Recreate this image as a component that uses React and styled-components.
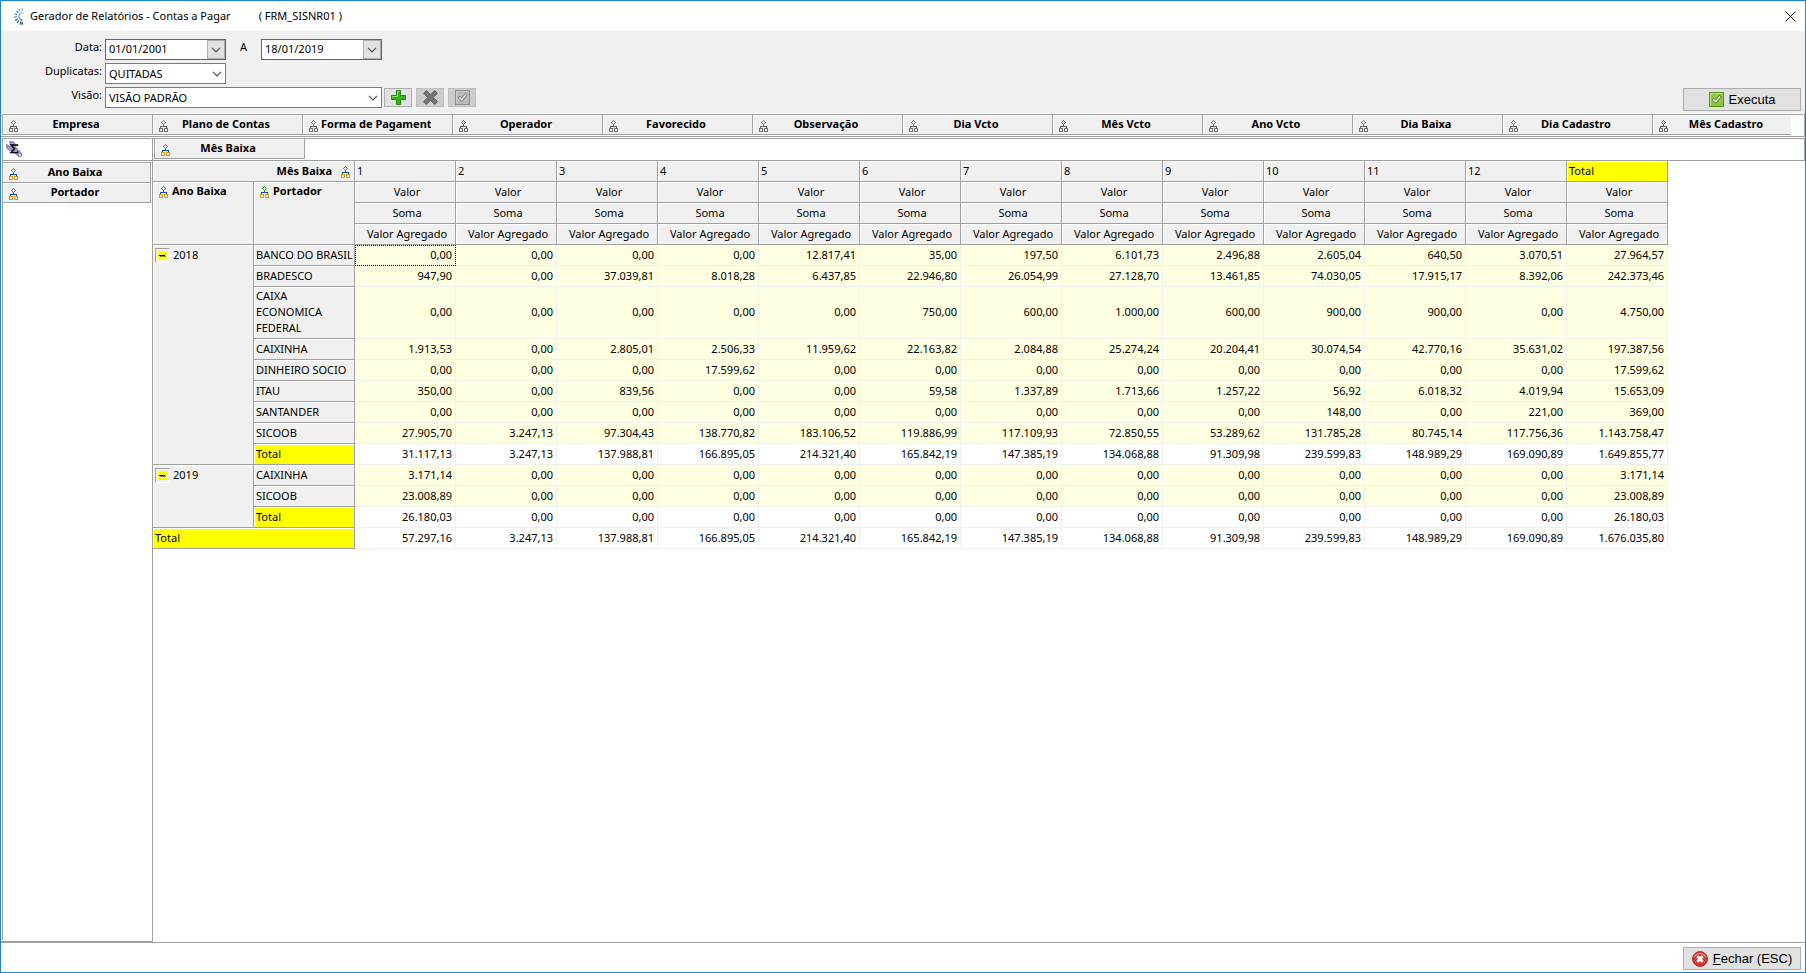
import React, { useState } from "react";
import styled, { createGlobalStyle } from "styled-components";

const LINE = "#a0a0a0";
const FACE = "#f0f0f0";
const YELLOW = "#ffff00";

const GlobalStyle = createGlobalStyle`
    * {
        box-sizing: border-box;
    }
    body {
        margin: 0;
        background-color: white;
        color: black;
        font-family: "Noto Sans", "Open Sans", sans-serif;
        font-size: 11px;
        line-height: 16px;
    }
    button, input, select {
        margin: 0;
        font: inherit;
        color: inherit;
    }
    svg {
        display: block;
        flex-shrink: 0;
    }
`;

const Window = styled.div`
    min-height: 100vh;
    display: flex;
    flex-direction: column;
    border: 1px solid #1883d7;
`;

const TitleBar = styled.header`
    height: 30px;
    padding: 0 9px 0 11px;
    display: flex;
    align-items: center;
`;

const Title = styled.h1`
    margin: 0 28px 0 6px;
    font-size: 11px;
    font-weight: 400;
    white-space: pre;
`;

const CloseButton = styled.button`
    margin-left: auto;
    padding: 0;
    border: none;
    background: none;
`;

const Toolbar = styled.section`
    padding: 8px 4px 2px 0;
    display: flex;
    justify-content: space-between;
    align-items: flex-end;
    background-color: ${FACE};
`;

const Filters = styled.div`
    padding-bottom: 3px;
    display: flex;
    flex-direction: column;
    gap: 3px;
`;

const FilterRow = styled.div`
    height: 21px;
    display: flex;
`;

const FilterLabel = styled.label`
    width: 101px;
    margin-right: 3px;
    text-align: right;
`;

const ToLabel = styled.label`
    width: 35px;
    text-align: center;
`;

const DateBox = styled.div`
    width: 121px;
    display: flex;
    border: 1px solid #646464;
    background-color: white;

    input {
        flex: 1;
        min-width: 0;
        padding: 0 3px 2px;
        border: none;
        background: none;
        outline: none;
    }
    button {
        width: 18px;
        padding: 0;
        border: 1px solid #adadad;
        background-color: #e1e1e1;
        display: flex;
        align-items: center;
        justify-content: center;
    }
`;

const SelectBox = styled.div`
    width: ${(props) => props.$width}px;
    display: grid;
    align-items: center;
    border: 1px solid #7a7a7a;
    background-color: white;

    select {
        grid-area: 1 / 1;
        width: 100%;
        height: 19px;
        padding: 0 20px 0 3px;
        border: none;
        background: none;
        outline: none;
        appearance: none;
    }
    svg {
        grid-area: 1 / 1;
        justify-self: end;
        margin-right: 3px;
        pointer-events: none;
    }
`;

const ViewButtons = styled.div`
    margin-left: 2px;
    display: flex;
    align-items: center;
    gap: 4px;
`;

const ViewButton = styled.button`
    width: 28px;
    height: 19px;
    padding: 0;
    display: flex;
    align-items: center;
    justify-content: center;
    border: 1px solid #adadad;
    background-color: #e1e1e1;
    &:disabled {
        border-color: #bfbfbf;
        background-color: #cccccc;
    }
`;

const ActionButton = styled.button`
    width: 118px;
    height: 23px;
    padding: 0;
    display: flex;
    align-items: center;
    justify-content: center;
    gap: 5px;
    border: 1px solid #adadad;
    background-color: #e1e1e1;
    font-family: "Liberation Sans", Arial, sans-serif;
    font-size: 13px;
`;

const AvailableFields = styled.section`
    padding: 1px;
    border-right: 1px solid ${LINE};
    border-bottom: 1px solid ${LINE};
`;

const FieldList = styled.div`
    padding-right: 12px;
    border-top: 1px solid ${LINE};

    & > div {
        display: flex;
        overflow: hidden;
    }
`;

const Field = styled.button`
    flex: none;
    width: ${(props) => props.$width}px;
    height: 20px;
    padding: 0 0 0 6px;
    display: flex;
    align-items: center;
    border: 0 solid ${LINE};
    border-width: ${(props) => props.$edges};
    background-color: ${FACE};
    box-shadow: inset 1px 1px white;
    font-weight: 700;

    svg {
        margin-top: 2px;
    }
    span {
        flex: 1;
        margin: 0 21px 2px 3px;
        overflow: hidden;
        white-space: nowrap;
        text-align: center;
    }
`;

const Content = styled.div`
    flex: 1;
    display: flex;
    margin-top: 1px;
    border-bottom: 1px solid ${LINE};
`;

const Sidebar = styled.aside`
    width: 152px;
    flex: none;
    padding-left: 1px;
    display: flex;
    flex-direction: column;
    border-right: 1px solid ${LINE};
    border-bottom: 1px solid ${LINE};
`;

const DataFields = styled.div`
    height: 22px;
    margin-right: 1px;
    padding: 2px 3px;
    border-top: 1px solid ${LINE};
    border-left: 1px solid ${LINE};
`;

const RowFields = styled.div`
    flex: 1;
    margin-bottom: 1px;
    padding-top: 1px;
    border-top: 1px solid ${LINE};
    border-left: 1px solid ${LINE};
`;

const RowFieldList = styled.div`
    width: 148px;
    border-top: 1px solid ${LINE};
`;

const Pivot = styled.main`
    flex: 1;
    min-width: 0;
`;

const ColumnFields = styled.div`
    height: 23px;
    padding-left: 1px;
    border: 1px solid ${LINE};
    border-left: none;
`;

const Table = styled.table`
    width: 1515px;
    table-layout: fixed;
    border-collapse: separate;
    border-spacing: 0;
`;

const HeadCell = styled.th`
    height: 21px;
    padding: 1px 0 2px ${(props) => (props.$align === "center" ? 4 : 2)}px;
    border: 0 solid ${LINE};
    border-width: 0 1px 1px 0;
    background-color: ${(props) => (props.$total ? YELLOW : FACE)};
    box-shadow: inset 1px 1px white;
    font-weight: 400;
    text-align: ${(props) => props.$align || "left"};
    vertical-align: ${(props) => (props.$top ? "top" : "middle")};
`;

const FieldName = styled.div`
    padding: 0 4px;
    display: flex;
    gap: 4px;
    align-items: center;
    justify-content: ${(props) => (props.$end ? "flex-end" : "flex-start")};
    font-weight: 700;

    svg {
        margin-top: 2px;
    }
    span {
        padding-right: ${(props) => (props.$end ? 5 : 0)}px;
    }
`;

const Group = styled.div`
    padding-top: 1px;
    display: flex;
    align-items: center;
    gap: 3px;
`;

const Toggle = styled.button`
    width: 15px;
    height: 15px;
    padding: 2px;
    border: 1px solid;
    border-color: ${LINE} white white ${LINE};
    background-color: ${FACE};
`;

const Value = styled.td`
    height: 21px;
    padding: 1px 3px 2px 0;
    border: 0 solid ${FACE};
    border-width: 0 1px 1px 0;
    background-color: ${(props) => (props.$total ? "white" : "#ffffe1")};
    text-align: right;
    ${(props) => props.$current && "outline: 1px dotted black; outline-offset: -1px;"}
`;

const Footer = styled.footer`
    padding: 4px 4px 2px;
    display: flex;
    justify-content: flex-end;
`;

const rays = [
    [92, "#8db6d3"],
    [115, "#7eb0d0"],
    [138, "#6aa3c4"],
    [161, "#5b97b8"],
    [184, "#4a8bac"],
    [207, "#3d7c9c"],
    [230, "#316c8a"],
    [253, "#285d78"],
    [268, "#214f68"],
];

const Logo = () => (
    <svg width="12" height="17" viewBox="0 0 12 17" strokeWidth="1.4">
        {rays.map(([angle, color]) => (
            <g key={angle} stroke={color} transform={`translate(10.5 8.5) rotate(${-angle})`}>
                <path d="M5.4 0h2.900" />
                <path d="M2.800 .6h1.500" opacity=".7" />
            </g>
        ))}
    </svg>
);

const CloseIcon = () => (
    <svg width="11" height="11" viewBox="0 0 11 11" stroke="black">
        <path d="M.5.5l10 10M10.5.5l-10 10" />
    </svg>
);

const Chevron = () => (
    <svg width="10" height="6" viewBox="0 0 10 6" fill="none" stroke="#505050" strokeWidth="1.2">
        <path d="M1 .8l4 4 4-4" />
    </svg>
);

const TreeIcon = ({ muted }) => {
    const [top, stem, leaf] = muted
        ? ["#707070", "#606060", "#707070"]
        : ["#2ca01c", "#0d4fae", "#d39a1c"];
    return (
        <svg width="9" height="12" viewBox="0 0 9 12" shapeRendering="crispEdges">
            <path
                fill={top}
                d="M4 0h1v1H4zM3 1h1v1H3zM5 1h1v1H5zM2 2h1v1H2zM6 2h1v1H6zM3 3h1v1H3zM5 3h1v1H5zM4 4h1v1H4z"
            />
            <path fill={stem} d="M4 5h1v1h3v2H7V7H2v1H1V6h3z" />
            <path
                fill={leaf}
                fillRule="evenodd"
                d="M0 8h4v4H0zM1 9v2h2V9zM5 8h4v4H5zM6 9v2h2V9z"
            />
        </svg>
    );
};

const SumIcon = () => (
    <svg width="17" height="17" viewBox="0 0 17 17">
        <path
            d="M3 .8L7.500.8l1.500 2 .3 3 6 6.200.8 2.400-1.600 1.700-2.300-.7L6.500 9.800l-3.200-.2L.8 7 .5 3.200l3.300 2.600 1.400-1.400z"
            fill="#9a9cc8"
            stroke="#6a6c98"
            strokeWidth=".8"
        />
        <path d="M11.500 5.200V4H5l3.500 3.800L5 11.600h6.700v-1.400" fill="none" stroke="black" strokeWidth="1.4" />
        <circle cx="14" cy="14.200" r="1" fill="#e4e4f4" />
    </svg>
);

const PlusIcon = () => (
    <svg width="15" height="15" viewBox="0 0 15 15">
        <path d="M5.5.5h4v5h5v4h-5v5h-4v-5h-5v-4h5z" fill="#35b51b" stroke="#23860f" />
        <path d="M8.500 1.500h-2v5h-5v1" fill="none" stroke="#8be070" />
    </svg>
);

const DeleteIcon = () => (
    <svg width="15" height="15" viewBox="0 0 15 15">
        <path
            d="M3.3.6l4.200 4.200L11.700.6l2.700 2.700-4.200 4.200 4.200 4.200-2.700 2.700-4.200-4.200-4.200 4.200L.6 11.700l4.200-4.200L.6 3.300z"
            fill="#767676"
            stroke="#5c5c5c"
        />
    </svg>
);

const CheckIcon = ({ muted }) => (
    <svg width="15" height="15" viewBox="0 0 15 15">
        <rect
            x=".5"
            y=".5"
            width="14"
            height="14"
            fill={muted ? "#b9b9b9" : "#8cc63a"}
            stroke={muted ? "#8c8c8c" : "#5b8f1c"}
        />
        <path d="M1.5 13.500v-12h12" fill="none" stroke={muted ? "#cfcfcf" : "#bfe285"} />
        <path
            d="M3.200 8l1.600-1.700 1.900 1.700L10.400 3.300l1.700 1.200-5 7z"
            fill={muted ? "#e2e2e2" : "#f4fbe8"}
            stroke={muted ? "#707070" : "#3f7410"}
            strokeWidth=".9"
        />
    </svg>
);

const CancelIcon = () => (
    <svg width="16" height="16" viewBox="0 0 16 16">
        <circle cx="8" cy="8" r="7.4" fill="#d23a35" stroke="#a32421" />
        <path d="M2.500 6a6 6 0 0 1 11 0" fill="none" stroke="#ec8a80" strokeWidth="1.400" />
        <path d="M5.300 5.300l5.400 5.400M10.700 5.300l-5.400 5.400" stroke="white" strokeWidth="2.800" />
    </svg>
);

const MinusIcon = () => (
    <svg width="9" height="9" viewBox="0 0 9 9" shapeRendering="crispEdges">
        <path fill={YELLOW} d="M0 0h9v9H0z" />
        <path fill="#808080" d="M2 5h6v1H2z" />
        <path fill="black" d="M1 4h6v1H1z" />
    </svg>
);

const fields = [
    "Empresa",
    "Plano de Contas",
    "Forma de Pagamento",
    "Operador",
    "Favorecido",
    "Observação",
    "Dia Vcto",
    "Mês Vcto",
    "Ano Vcto",
    "Dia Baixa",
    "Dia Cadastro",
    "Mês Cadastro",
];

const months = ["1", "2", "3", "4", "5", "6", "7", "8", "9", "10", "11", "12"];
const columns = [...months, "Total"];

const groups = [
    {
        year: "2018",
        rows: [
            ["BANCO DO BRASIL", "0,00 0,00 0,00 0,00 12.817,41 35,00 197,50 6.101,73 2.496,88 2.605,04 640,50 3.070,51 27.964,57"],
            ["BRADESCO", "947,90 0,00 37.039,81 8.018,28 6.437,85 22.946,80 26.054,99 27.128,70 13.461,85 74.030,05 17.915,17 8.392,06 242.373,46"],
            ["CAIXA ECONOMICA FEDERAL", "0,00 0,00 0,00 0,00 0,00 750,00 600,00 1.000,00 600,00 900,00 900,00 0,00 4.750,00"],
            ["CAIXINHA", "1.913,53 0,00 2.805,01 2.506,33 11.959,62 22.163,82 2.084,88 25.274,24 20.204,41 30.074,54 42.770,16 35.631,02 197.387,56"],
            ["DINHEIRO SOCIO", "0,00 0,00 0,00 17.599,62 0,00 0,00 0,00 0,00 0,00 0,00 0,00 0,00 17.599,62"],
            ["ITAU", "350,00 0,00 839,56 0,00 0,00 59,58 1.337,89 1.713,66 1.257,22 56,92 6.018,32 4.019,94 15.653,09"],
            ["SANTANDER", "0,00 0,00 0,00 0,00 0,00 0,00 0,00 0,00 0,00 148,00 0,00 221,00 369,00"],
            ["SICOOB", "27.905,70 3.247,13 97.304,43 138.770,82 183.106,52 119.886,99 117.109,93 72.850,55 53.289,62 131.785,28 80.745,14 117.756,36 1.143.758,47"],
            ["Total", "31.117,13 3.247,13 137.988,81 166.895,05 214.321,40 165.842,19 147.385,19 134.068,88 91.309,98 239.599,83 148.989,29 169.090,89 1.649.855,77"],
        ],
    },
    {
        year: "2019",
        rows: [
            ["CAIXINHA", "3.171,14 0,00 0,00 0,00 0,00 0,00 0,00 0,00 0,00 0,00 0,00 0,00 3.171,14"],
            ["SICOOB", "23.008,89 0,00 0,00 0,00 0,00 0,00 0,00 0,00 0,00 0,00 0,00 0,00 23.008,89"],
            ["Total", "26.180,03 0,00 0,00 0,00 0,00 0,00 0,00 0,00 0,00 0,00 0,00 0,00 26.180,03"],
        ],
    },
];

const grandTotal =
    "57.297,16 3.247,13 137.988,81 166.895,05 214.321,40 165.842,19 147.385,19 134.068,88 91.309,98 239.599,83 148.989,29 169.090,89 1.676.035,80";

const DateField = ({ id, defaultValue }) => (
    <DateBox>
        <input id={id} type="text" defaultValue={defaultValue} />
        <button type="button" aria-label="Abrir calendário">
            <Chevron />
        </button>
    </DateBox>
);

const Values = ({ id, values, total, current, onSelect }) =>
    values.split(" ").map((value, index) => (
        <Value
            key={index}
            $total={total}
            $current={current === `${id}-${index}`}
            onClick={() => onSelect(`${id}-${index}`)}
        >
            {value}
        </Value>
    ));

const PivotTable = () => {
    const [current, setCurrent] = useState("2018-0-0");
    const [closed, setClosed] = useState([]);

    const toggle = (year) =>
        setClosed(
            closed.includes(year) ? closed.filter((item) => item !== year) : [...closed, year]
        );

    return (
        <Table>
            <thead>
                <tr>
                    <HeadCell colSpan={2}>
                        <FieldName $end>
                            <span>Mês Baixa</span>
                            <TreeIcon />
                        </FieldName>
                    </HeadCell>
                    {columns.map((column) => (
                        <HeadCell key={column} $total={column === "Total"}>
                            {column}
                        </HeadCell>
                    ))}
                </tr>
                {["Valor", "Soma", "Valor Agregado"].map((text, index) => (
                    <tr key={text}>
                        {index === 0 &&
                            ["Ano Baixa", "Portador"].map((name) => (
                                <HeadCell key={name} rowSpan={3} $top>
                                    <FieldName>
                                        <TreeIcon />
                                        <span>{name}</span>
                                    </FieldName>
                                </HeadCell>
                            ))}
                        {columns.map((column) => (
                            <HeadCell key={column} $align="center">
                                {text}
                            </HeadCell>
                        ))}
                    </tr>
                ))}
            </thead>
            <tbody>
                {groups.map(({ year, rows }) => {
                    const shown = closed.includes(year) ? rows.slice(-1) : rows;
                    return shown.map(([name, values], index) => (
                        <tr key={year + name}>
                            {index === 0 && (
                                <HeadCell rowSpan={shown.length} $top>
                                    <Group>
                                        <Toggle
                                            type="button"
                                            aria-label={`Recolher ${year}`}
                                            onClick={() => toggle(year)}
                                        >
                                            <MinusIcon />
                                        </Toggle>
                                        {year}
                                    </Group>
                                </HeadCell>
                            )}
                            <HeadCell $total={name === "Total"}>{name}</HeadCell>
                            <Values
                                id={`${year}-${index}`}
                                values={values}
                                total={name === "Total"}
                                current={current}
                                onSelect={setCurrent}
                            />
                        </tr>
                    ));
                })}
                <tr>
                    <HeadCell colSpan={2} $total>
                        Total
                    </HeadCell>
                    <Values
                        id="total"
                        values={grandTotal}
                        total
                        current={current}
                        onSelect={setCurrent}
                    />
                </tr>
            </tbody>
        </Table>
    );
};

const App = () => (
    <>
        <GlobalStyle />
        <Window>
            <TitleBar>
                <Logo />
                <Title>Gerador de Relatórios - Contas a Pagar</Title>
                <span>( FRM_SISNR01 )</span>
                <CloseButton type="button" aria-label="Fechar janela">
                    <CloseIcon />
                </CloseButton>
            </TitleBar>
            <Toolbar>
                <Filters>
                    <FilterRow>
                        <FilterLabel htmlFor="from">Data:</FilterLabel>
                        <DateField id="from" defaultValue="01/01/2001" />
                        <ToLabel htmlFor="to">A</ToLabel>
                        <DateField id="to" defaultValue="18/01/2019" />
                    </FilterRow>
                    <FilterRow>
                        <FilterLabel htmlFor="status">Duplicatas:</FilterLabel>
                        <SelectBox $width={121}>
                            <select id="status">
                                <option>QUITADAS</option>
                            </select>
                            <Chevron />
                        </SelectBox>
                    </FilterRow>
                    <FilterRow>
                        <FilterLabel htmlFor="view">Visão:</FilterLabel>
                        <SelectBox $width={277}>
                            <select id="view">
                                <option>VISÃO PADRÃO</option>
                            </select>
                            <Chevron />
                        </SelectBox>
                        <ViewButtons>
                            <ViewButton type="button" aria-label="Nova visão">
                                <PlusIcon />
                            </ViewButton>
                            <ViewButton type="button" aria-label="Excluir visão" disabled>
                                <DeleteIcon />
                            </ViewButton>
                            <ViewButton type="button" aria-label="Salvar visão" disabled>
                                <CheckIcon muted />
                            </ViewButton>
                        </ViewButtons>
                    </FilterRow>
                </Filters>
                <ActionButton type="button">
                    <CheckIcon />
                    Executa
                </ActionButton>
            </Toolbar>
            <AvailableFields>
                <FieldList>
                    <div>
                        {fields.map((name) => (
                            <Field key={name} type="button" $width={150} $edges="0 0 1px 1px">
                                <TreeIcon muted />
                                <span>{name}</span>
                            </Field>
                        ))}
                    </div>
                </FieldList>
            </AvailableFields>
            <Content>
                <Sidebar>
                    <DataFields>
                        <SumIcon />
                    </DataFields>
                    <RowFields>
                        <RowFieldList>
                            {["Ano Baixa", "Portador"].map((name) => (
                                <Field key={name} type="button" $width={148} $edges="0 1px 1px 0">
                                    <TreeIcon />
                                    <span>{name}</span>
                                </Field>
                            ))}
                        </RowFieldList>
                    </RowFields>
                </Sidebar>
                <Pivot>
                    <ColumnFields>
                        <Field type="button" $width={151} $edges="0 1px 1px 1px">
                            <TreeIcon />
                            <span>Mês Baixa</span>
                        </Field>
                    </ColumnFields>
                    <PivotTable />
                </Pivot>
            </Content>
            <Footer>
                <ActionButton type="button">
                    <CancelIcon />
                    <span>
                        <u>F</u>echar (ESC)
                    </span>
                </ActionButton>
            </Footer>
        </Window>
    </>
);

export default App;
